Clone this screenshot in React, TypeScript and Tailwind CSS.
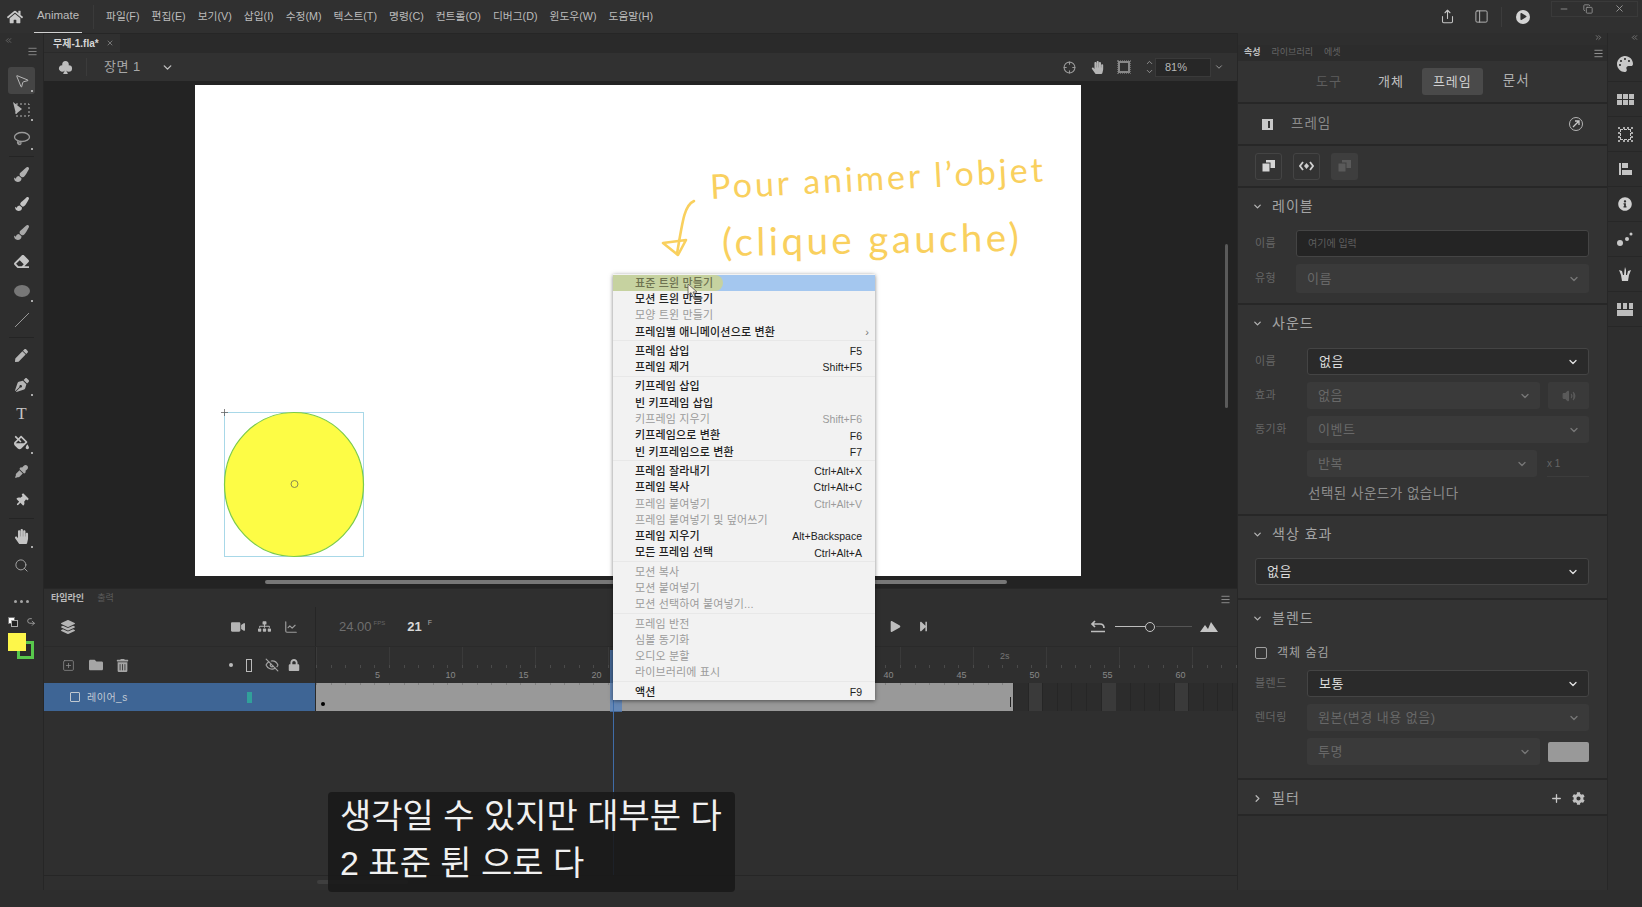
import type { ReactNode } from "react";
import {
  ChevronDown,
  ChevronRight,
  ChevronUp,
  ChevronsLeft,
  ChevronsRight,
  Crosshair,
  EyeOff,
  LineChart,
  Menu,
  Minus,
  MousePointer2,
  PanelLeft,
  Plus,
  Search,
  Share,
  Slash,
  SquarePlus,
  Undo2,
  Volume2,
  X,
  Copy,
} from "lucide-react";
import {
  FaCog,
  FaEraser,
  FaEyeDropper,
  FaFillDrip,
  FaFolder,
  FaHandPaper,
  FaHome,
  FaInfoCircle,
  FaLayerGroup,
  FaLock,
  FaPaintBrush,
  FaPalette,
  FaPen,
  FaPenNib,
  FaPlay,
  FaSitemap,
  FaStepForward,
  FaThumbtack,
  FaTrashAlt,
  FaVideo,
} from "react-icons/fa";
import { BsSuitClubFill } from "react-icons/bs";

const topMenu = ["파일(F)", "편집(E)", "보기(V)", "삽입(I)", "수정(M)", "텍스트(T)", "명령(C)", "컨트롤(O)", "디버그(D)", "윈도우(W)", "도움말(H)"];

type MenuRow = { label: string; key?: string; off?: boolean; arrow?: boolean; hot?: boolean };

const menuGroups: MenuRow[][] = [
  [
    { label: "표준 트윈 만들기", hot: true },
    { label: "모션 트윈 만들기" },
    { label: "모양 트윈 만들기", off: true },
    { label: "프레임별 애니메이션으로 변환", arrow: true },
  ],
  [
    { label: "프레임 삽입", key: "F5" },
    { label: "프레임 제거", key: "Shift+F5" },
  ],
  [
    { label: "키프레임 삽입" },
    { label: "빈 키프레임 삽입" },
    { label: "키프레임 지우기", key: "Shift+F6", off: true },
    { label: "키프레임으로 변환", key: "F6" },
    { label: "빈 키프레임으로 변환", key: "F7" },
  ],
  [
    { label: "프레임 잘라내기", key: "Ctrl+Alt+X" },
    { label: "프레임 복사", key: "Ctrl+Alt+C" },
    { label: "프레임 붙여넣기", key: "Ctrl+Alt+V", off: true },
    { label: "프레임 붙여넣기 및 덮어쓰기", off: true },
    { label: "프레임 지우기", key: "Alt+Backspace" },
    { label: "모든 프레임 선택", key: "Ctrl+Alt+A" },
  ],
  [
    { label: "모션 복사", off: true },
    { label: "모션 붙여넣기", off: true },
    { label: "모션 선택하여 붙여넣기...", off: true },
  ],
  [
    { label: "프레임 반전", off: true },
    { label: "심볼 동기화", off: true },
    { label: "오디오 분할", off: true },
    { label: "라이브러리에 표시", off: true },
  ],
  [{ label: "액션", key: "F9" }],
];

function TransformIcon() {
  return (
    <svg width="20" height="18" viewBox="0 0 20 18" fill="none">
      <rect x="4" y="3" width="13" height="12" stroke="#b5b5b5" strokeDasharray="2 2" />
      <path d="M1 1 L10 8 L4 13 Z" fill="#b5b5b5" />
    </svg>
  );
}

function LassoIcon() {
  return (
    <svg width="18" height="16" viewBox="0 0 18 16" fill="none" stroke="#9a9a9a" strokeWidth="1.3">
      <ellipse cx="9" cy="6" rx="7.5" ry="4.5" />
      <path d="M5 10 C3 13 8 15 8 12 C8 10 5 10 6 14" />
    </svg>
  );
}

type Tool = { icon: ReactNode; more?: boolean };

const toolGroups: Tool[][] = [
  [
    { icon: <MousePointer2 size={16} strokeWidth={1.3} color="#c9c9c9" />, more: true },
    { icon: <TransformIcon />, more: true },
    { icon: <LassoIcon />, more: true },
  ],
  [
    { icon: <FaPaintBrush size={15} color="#b0b0b0" /> },
    { icon: <FaPaintBrush size={14} color="#c4c4c4" /> },
    { icon: <FaPaintBrush size={15} color="#a8a8a8" /> },
    { icon: <FaEraser size={15} color="#c4c4c4" /> },
    { icon: <div className="w-[16px] h-[12px] rounded-[50%] bg-[#777]" />, more: true },
    { icon: <Slash size={16} strokeWidth={1.3} color="#aaa" /> },
  ],
  [
    { icon: <FaPen size={13} color="#b5b5b5" /> },
    { icon: <FaPenNib size={14} color="#b5b5b5" />, more: true },
    { icon: <span className="text-[17px] leading-none text-[#c4c4c4] font-['Liberation_Serif',serif]">T</span> },
    { icon: <FaFillDrip size={15} color="#c4c4c4" />, more: true },
    { icon: <FaEyeDropper size={13} color="#aaa" /> },
    { icon: <FaThumbtack size={13} color="#c4c4c4" className="rotate-45" /> },
  ],
  [
    { icon: <FaHandPaper size={15} color="#c4c4c4" />, more: true },
    { icon: <Search size={15} strokeWidth={1.5} color="#aaa" /> },
  ],
];

function Toolbar() {
  return (
    <div className="w-[44px] shrink-0 flex flex-col bg-[#2e2e2e] border-r border-[#262626]">
      <div className="h-[33px] relative shrink-0">
        <ChevronsLeft size={9} color="#777" className="ml-[4px] mt-[3px]" />
        <Menu size={11} color="#8a8a8a" className="ml-[27px] mt-[1px]" />
      </div>
      {toolGroups.map((group, g) => (
        <div key={g} className="flex flex-col">
          {g > 0 && (
            <div className="h-[7px] flex items-center px-[9px]">
              <div className="h-px w-full bg-[#242424]" />
            </div>
          )}
          {group.map((tool, i) => (
            <div key={i} className="h-[29px] flex items-center justify-center">
              <div className={`relative w-[27px] h-[27px] flex items-center justify-center rounded-[3px] ${g === 0 && i === 0 ? "bg-[#454545]" : ""}`}>
                {tool.icon}
                {tool.more && <span className="absolute right-[2px] bottom-[2px] w-[2px] h-[2px] bg-[#aaa]" />}
              </div>
            </div>
          ))}
        </div>
      ))}
      <div className="mt-[14px] h-[14px] flex items-center justify-center gap-[3px]">
        <span className="w-[3px] h-[3px] bg-[#a5a5a5] rounded-full" />
        <span className="w-[3px] h-[3px] bg-[#a5a5a5] rounded-full" />
        <span className="w-[3px] h-[3px] bg-[#a5a5a5] rounded-full" />
      </div>
      <div className="mt-[7px] h-[14px] flex items-center pl-[8px] gap-[8px]">
        <div className="relative w-[10px] h-[10px]">
          <div className="absolute left-0 top-0 w-[7px] h-[7px] bg-white border border-[#777]" />
          <div className="absolute left-[3px] top-[3px] w-[7px] h-[7px] bg-[#222] border border-[#aaa]" />
        </div>
        <Undo2 size={10} color="#aaa" className="rotate-180" />
      </div>
      <div className="relative h-[28px] mt-[4px]">
        <div className="absolute left-[17px] top-[8px] w-[17px] h-[18px] border-[3px] border-[#58c84c] bg-[#2a2a2a]" />
        <div className="absolute left-[8px] top-0 w-[18px] h-[18px] bg-[#fdf64a]" />
      </div>
    </div>
  );
}

function TopBar() {
  return (
    <div className="h-[33px] shrink-0 flex items-center bg-[#303030] text-[#bdbdbd] text-[10.75px] relative">
      <FaHome size={16} color="#c8c8c8" className="ml-[7px]" />
      <div className="ml-[11px] w-[48px] h-[33px] flex items-center justify-center border-b border-[#d0d0d0] text-[11.5px]">Animate</div>
      <div className="w-px h-[24px] bg-[#3a3a3a] ml-[11px]" />
      <div className="ml-[12px] flex gap-[12px]">
        {topMenu.map((m) => (
          <span key={m}>{m}</span>
        ))}
      </div>
      <div className="ml-auto mr-[4px] flex items-center">
        <Share size={15} color="#c4c4c4" strokeWidth={1.7} />
        <PanelLeft size={15} color="#b0b0b0" strokeWidth={1.6} className="ml-[19px]" />
        <div className="w-px h-[20px] bg-[#3c3c3c] ml-[12px]" />
        <div className="ml-[14px] w-[14px] h-[14px] rounded-full bg-[#d4d4d4] flex items-center justify-center">
          <FaPlay size={7} color="#303030" className="ml-[1px]" />
        </div>
        <div className="ml-[21px] w-[87px] h-[16px] -mt-[16px] flex items-center pl-[7px] border border-[#3a3a3a]">
          <Minus size={10} color="#999" />
          <Copy size={10} color="#999" className="ml-[14px]" />
          <X size={11} color="#999" className="ml-[21px]" />
        </div>
      </div>
    </div>
  );
}

function CanvasDrawing() {
  return (
    <>
      <svg width="145" height="150" viewBox="0 0 145 150" fill="none" className="absolute left-[26px] top-[324px]">
        <rect x="3.5" y="3.5" width="139" height="144" stroke="#a8d8e8" />
        <ellipse cx="73" cy="75.5" rx="69.5" ry="72" fill="#fdfc45" stroke="#7ccb4a" strokeWidth="1.2" />
        <circle cx="73.5" cy="75" r="3.5" stroke="#8a8a50" strokeWidth="1" />
        <path d="M0 3.5 H7 M3.5 0 V7" stroke="#666" strokeWidth="0.8" />
      </svg>
      <svg width="40" height="70" viewBox="0 0 40 70" fill="none" stroke="#f9d05e" strokeWidth="2.6" strokeLinecap="round" strokeLinejoin="round" className="absolute left-[464px] top-[112px]">
        <path d="M35 4 C26 8 24 20 18 57" />
        <path d="M19 58 L4 46 L27 43 Z" />
      </svg>
      <div className="absolute left-[515px] top-[84px] text-[34px] leading-none text-[#f9d05e] tracking-[3px] -rotate-[3deg] font-['Lato',sans-serif] font-normal whitespace-nowrap origin-left">
        Pour animer l’objet
      </div>
      <div className="absolute left-[527px] top-[137px] text-[38.5px] leading-none text-[#f9d05e] tracking-[3.4px] -rotate-[1deg] font-['Lato',sans-serif] font-normal whitespace-nowrap origin-left">
        (clique gauche)
      </div>
    </>
  );
}

function CenterTop() {
  return (
    <>
      <div className="h-[19px] shrink-0 flex bg-[#2a2a2a] border-t border-[#262626]">
        <div className="w-[76px] flex items-center pl-[9px] bg-[#303030] text-[10px] font-bold text-[#d6d6d6]">
          무제-1.fla*
          <X size={8} color="#999" className="ml-[7px]" />
        </div>
      </div>
      <div className="h-[29px] shrink-0 flex items-center bg-[#313131] border-t border-[#2a2a2a]">
        <BsSuitClubFill size={15} color="#bdbdbd" className="ml-[14px]" />
        <div className="w-px h-[18px] bg-[#3b3b3b] ml-[13px]" />
        <span className="ml-[17px] text-[13px] text-[#a8a8a8] tracking-[0.5px]">장면 1</span>
        <ChevronDown size={13} strokeWidth={2.5} color="#c0c0c0" className="ml-[20px]" />
        <div className="ml-auto flex items-center pr-[13px]">
          <Crosshair size={13} color="#999" />
          <FaHandPaper size={13} color="#b5b5b5" className="ml-[15px]" />
          <div className="ml-[14px] w-[12px] h-[12px] border-2 border-[#888] outline-1 outline-dotted outline-[#666]" />
          <div className="ml-[15px] flex flex-col">
            <ChevronUp size={9} color="#aaa" />
            <ChevronDown size={9} color="#aaa" />
          </div>
          <div className="ml-[1px] w-[56px] h-[19px] bg-[#272727] border border-[#3a3a3a] flex items-center pl-[9px] text-[11px] text-[#b8b8b8]">81%</div>
          <ChevronDown size={10} color="#aaa" className="ml-[3px]" />
        </div>
      </div>
      <div className="h-[507px] shrink-0 relative bg-[#232323] pt-[4px] pl-[151px]">
        <div className="w-[886px] h-[491px] bg-white relative">
          <CanvasDrawing />
        </div>
        <div className="absolute left-[221px] top-[499px] w-[742px] h-[4px] bg-[#777] rounded-full" />
        <div className="absolute left-[1181px] top-[163px] w-[3px] h-[164px] bg-[#5a5a5a] rounded-full" />
      </div>
    </>
  );
}

function Timeline() {
  const numbers = [5, 10, 15, 20, null, null, null, 40, 45, 50, 55, 60];
  return (
    <div className="flex-1 flex flex-col bg-[#2f2f2f] text-[#aaa] border-t border-[#272727]">
      <div className="h-[18px] shrink-0 flex items-center pl-[7px] pt-[2px] gap-[13px] text-[9px] relative">
        <span className="font-bold text-[#bcbcbc]">타임라인</span>
        <span className="text-[#5c5c5c]">출력</span>
        <Menu size={11} color="#909090" className="ml-auto mr-[6px]" />
      </div>
      <div className="h-[39px] shrink-0 flex items-center">
        <div className="w-[272px] flex items-center border-r border-[#262626] h-full">
          <FaLayerGroup size={14} color="#b5b5b5" className="ml-[17px]" />
          <FaVideo size={14} color="#b5b5b5" className="ml-[156px]" />
          <FaSitemap size={13} color="#b5b5b5" className="ml-[13px]" />
          <LineChart size={14} color="#9c9c9c" className="ml-[13px]" />
        </div>
        <div className="w-[572px] flex items-center pl-[23px]">
          <span className="text-[13px] text-[#6e6e6e]">24.00</span>
          <span className="text-[6px] text-[#666] ml-[2px] -mt-[7px]">FPS</span>
          <span className="ml-[22px] text-[13px] font-bold text-[#d8d8d8]">21</span>
          <span className="ml-[6px] text-[7px] -mt-[7px]">F</span>
        </div>
        <FaPlay size={11} color="#bdbdbd" className="ml-[2px]" />
        <FaStepForward size={11} color="#bdbdbd" className="ml-[17px]" />
        <svg width="16" height="13" viewBox="0 0 16 13" fill="none" stroke="#bdbdbd" strokeWidth="1.7" className="ml-[161px]">
          <path d="M5 1 L2 4 L5 7 M2 4 H10 C13 4 14 6 14 8 M1 11.5 H15" />
        </svg>
        <div className="ml-[9px] w-[30px] h-[1.5px] bg-[#bdbdbd]" />
        <div className="w-[10px] h-[10px] rounded-full border-[1.5px] border-[#c4c4c4]" />
        <div className="w-[36px] h-px bg-[#555] ml-[1px]" />
        <svg width="18" height="10" viewBox="0 0 18 10" fill="#c4c4c4" className="ml-[8px]">
          <path d="M0 10 L5 3 L8 7 L11 0 L18 10 Z" />
        </svg>
      </div>
      <div className="h-[37px] shrink-0 flex border-t border-[#2a2a2a]">
        <div className="w-[272px] flex items-center border-r border-[#262626]">
          <SquarePlus size={13} color="#8f8f8f" strokeWidth={1.4} className="ml-[18px]" />
          <FaFolder size={14} color="#a5a5a5" className="ml-[14px]" />
          <FaTrashAlt size={13} color="#a5a5a5" className="ml-[13px]" />
          <span className="ml-[100px] w-[4px] h-[4px] rounded-full bg-[#bbb]" />
          <div className="ml-[13px] w-[6px] h-[13px] border border-[#bbb]" />
          <EyeOff size={14} color="#a5a5a5" className="ml-[13px]" />
          <FaLock size={12} color="#b5b5b5" className="ml-[9px]" />
        </div>
        <div className="flex-1 relative pl-[25px] flex items-end pb-[1px] text-[9px] text-[#888] bg-[repeating-linear-gradient(90deg,#3a3a3a_0,#3a3a3a_1px,transparent_1px,transparent_73px)] bg-[length:100%_18px] bg-no-repeat">
          {numbers.map((n, i) => (
            <span key={i} className="w-[73px] text-center shrink-0">
              {n}
            </span>
          ))}
          <span className="absolute left-[684px] top-[3px] text-[9px] text-[#777]">2s</span>
          <div className="absolute left-0 right-0 top-[18px] h-[3px] bg-[repeating-linear-gradient(90deg,#4a4a4a_0,#4a4a4a_1px,transparent_1px,transparent_14.6px)]" />
        </div>
      </div>
      <div className="h-[28px] shrink-0 flex">
        <div className="w-[272px] flex items-center bg-[#3e6595] border-r border-[#2a2a2a] relative">
          <div className="ml-[26px] w-[10px] h-[10px] border-[1.5px] border-[#c0c8d0] rounded-[1px]" />
          <span className="ml-[7px] text-[10px] text-[#c4cbd4] tracking-[0.5px]">레이어_s</span>
          <div className="absolute left-[203px] top-[9px] w-[5px] h-[11px] bg-[#31a09a]" />
        </div>
        <div className="flex-1 flex relative bg-[#2c2c2c]">
          <div className="w-[697px] h-full bg-[#999999] relative bg-[repeating-linear-gradient(90deg,#808080_0,#808080_1px,transparent_1px,transparent_14.6px)] bg-[length:100%_2px] bg-no-repeat">
            <div className="absolute left-[5px] top-[19px] w-[4px] h-[4px] rounded-full bg-black" />
            <div className="absolute right-[2px] top-[14px] w-px h-[10px] bg-[#222]" />
          </div>
          <div className="flex-1 h-full pl-[16px] flex bg-[repeating-linear-gradient(90deg,#262626_0,#262626_1px,transparent_1px,transparent_14.6px)]">
            <div className="w-[13px] h-full bg-[#3a3a3a]" />
            <div className="w-[60px] h-full" />
            <div className="w-[14px] h-full bg-[#3a3a3a]" />
            <div className="w-[59px] h-full" />
            <div className="w-[13px] h-full bg-[#3a3a3a]" />
          </div>
        </div>
      </div>
      <div className="flex-1 relative">
        <div className="absolute left-0 right-0 bottom-[14px] h-px bg-[#262626]" />
        <div className="absolute left-[273px] bottom-[6px] w-[91px] h-[4px] rounded-full bg-[#3f3f3f]" />
      </div>
    </div>
  );
}

function Select({ text, active, className = "" }: { text: string; active?: boolean; className?: string }) {
  return (
    <div className={`flex items-center justify-between h-[27px] rounded-[3px] pl-[11px] pr-[9px] text-[13px] tracking-[0.5px] ${active ? "bg-[#2a2a2a] border border-[#444] text-[#dcdcdc]" : "bg-[#3a3a3a] text-[#686868]"} ${className}`}>
      <span>{text}</span>
      <ChevronDown size={12} strokeWidth={2.6} color={active ? "#e2e2e2" : "#777"} />
    </div>
  );
}

function Field({ label, width = 52, children }: { label?: string; width?: number; children: ReactNode }) {
  return (
    <div className="flex items-center gap-0 mb-[7px]">
      <span style={{ width }} className="shrink-0 text-[11px] text-[#666] tracking-[0.5px]">
        {label}
      </span>
      {children}
    </div>
  );
}

function Section({ title, height, open = true, extra, children }: { title: string; height: number; open?: boolean; extra?: ReactNode; children?: ReactNode }) {
  return (
    <div style={{ height }} className="shrink-0 flex flex-col pl-[17px] pr-[18px] border-b-2 border-[#272727]">
      <div className="h-[36px] shrink-0 flex items-center text-[14px] text-[#a4a4a4] tracking-[1px]">
        {open ? <ChevronDown size={11} strokeWidth={2.8} color="#b5b5b5" className="-ml-[3px]" /> : <ChevronRight size={11} strokeWidth={2.8} color="#b5b5b5" className="-ml-[3px]" />}
        <span className="ml-[9px]">{title}</span>
        {extra}
      </div>
      {children}
    </div>
  );
}

function KeyframeIcon() {
  return (
    <svg width="15" height="12" viewBox="0 0 15 12" fill="none" stroke="#d0d0d0" strokeWidth="1.8">
      <path d="M4 2 L1 6 L4 10 M11 2 L14 6 L11 10" />
      <path d="M7.5 3 L10 6 L7.5 9 L5 6 Z" fill="#d0d0d0" stroke="none" />
    </svg>
  );
}

function InsertIcon({ color, back }: { color: string; back: string }) {
  return (
    <svg width="13" height="12" viewBox="0 0 13 12">
      <rect x="4" y="0" width="9" height="8" fill={color} />
      <rect x="0" y="3" width="8" height="9" fill={color} stroke={back} strokeWidth="1" />
    </svg>
  );
}

function Properties() {
  return (
    <div className="w-[371px] shrink-0 flex flex-col bg-[#333333] border-x border-[#272727]">
      <div className="h-[12px] shrink-0 flex justify-end pr-[4px] bg-[#2e2e2e]">
        <ChevronsRight size={9} color="#888" />
      </div>
      <div className="h-[16px] shrink-0 flex items-center text-[9px] bg-[#2c2c2c] pl-[6px] gap-[11px] text-[#666]">
        <span className="font-bold text-[#c0c0c0]">속성</span>
        <span>라이브러리</span>
        <span>에셋</span>
        <Menu size={11} color="#999" className="ml-auto mr-[3px]" />
      </div>
      <div className="h-[43px] shrink-0 flex items-center border-b-2 border-[#272727] text-[13px] tracking-[1px]">
        <span className="ml-[78px] text-[#5e5e5e]">도구</span>
        <span className="ml-[36px] text-[#c0c0c0]">개체</span>
        <span className="ml-[18px] w-[61px] h-[27px] flex items-center justify-center rounded-[3px] bg-[#4a4a4a] text-[#d0d0d0]">프레임</span>
        <span className="ml-[20px] text-[13.5px] text-[#b0b0b0]">문서</span>
      </div>
      <div className="h-[42px] shrink-0 flex items-center border-b-2 border-[#272727]">
        <div className="ml-[24px] w-[11px] h-[11px] bg-[#c8c8c8] flex items-center justify-center">
          <div className="ml-[2px] w-[2px] h-[7px] bg-[#333]" />
        </div>
        <span className="ml-[18px] text-[13.5px] text-[#8a8a8a] tracking-[1px]">프레임</span>
        <div className="ml-auto mr-[24px] w-[14px] h-[14px] rounded-full border border-[#b5b5b5] flex items-center justify-center text-[#bbb]">
          <svg width="8" height="8" viewBox="0 0 8 8" fill="none" stroke="#c8c8c8" strokeWidth="1.3">
            <path d="M1 7 L7 1 M3 1 H7 V5" />
          </svg>
        </div>
      </div>
      <div className="h-[42px] shrink-0 flex items-center gap-[11px] pl-[17px] border-b-2 border-[#272727]">
        <div className="w-[27px] h-[27px] rounded-[3px] border border-[#444] flex items-center justify-center">
          <InsertIcon color="#d4d4d4" back="#333" />
        </div>
        <div className="w-[27px] h-[27px] rounded-[3px] border border-[#444] flex items-center justify-center">
          <KeyframeIcon />
        </div>
        <div className="w-[27px] h-[27px] rounded-[3px] bg-[#3e3e3e] flex items-center justify-center">
          <InsertIcon color="#5a5a5a" back="#3e3e3e" />
        </div>
      </div>
      <Section title="레이블" height={117}>
        <div className="pt-[6px]">
          <Field label="이름" width={41}>
            <div className="flex-1 h-[27px] rounded-[3px] bg-[#242424] border border-[#444] flex items-center pl-[11px] text-[10px] text-[#5e5e5e]">
              여기에 입력
            </div>
          </Field>
          <Field label="유형" width={41}>
            <Select text="이름" className="flex-1 h-[29px]" />
          </Field>
        </div>
      </Section>
      <Section title="사운드" height={211}>
        <div className="pt-[7px]">
          <Field label="이름">
            <Select text="없음" active className="flex-1" />
          </Field>
          <Field label="효과">
            <Select text="없음" className="w-[233px]" />
            <div className="ml-[8px] w-[41px] h-[27px] rounded-[2px] bg-[#3a3a3a] flex items-center justify-center">
              <Volume2 size={14} fill="#5a5a5a" color="#5a5a5a" />
            </div>
          </Field>
          <Field label="동기화">
            <Select text="이벤트" className="flex-1" />
          </Field>
          <Field>
            <Select text="반복" className="w-[230px]" />
            <span className="ml-[10px] w-[42px] h-[27px] flex items-center border-b border-[#3c3c3c] text-[10px] text-[#666]">x 1</span>
          </Field>
          <div className="pl-[53px] mt-[2px] text-[13.5px] text-[#8c8c8c] tracking-[0.5px]">선택된 사운드가 없습니다</div>
        </div>
      </Section>
      <Section title="색상 효과" height={84}>
        <div className="pt-[6px]">
          <Select text="없음" active />
        </div>
      </Section>
      <Section title="블렌드" height={180}>
        <div className="h-[34px] flex items-center text-[12px] text-[#a4a4a4] tracking-[1px]">
          <div className="w-[12px] h-[12px] rounded-[2px] border-[1.5px] border-[#a0a0a0] mr-[10px]" />
          객체 숨김
        </div>
        <Field label="블렌드">
          <Select text="보통" active className="flex-1" />
        </Field>
        <Field label="렌더링">
          <Select text="원본(변경 내용 없음)" className="flex-1" />
        </Field>
        <Field>
          <Select text="투명" className="w-[234px]" />
          <div className="ml-[8px] w-[41px] h-[20px] rounded-[2px] bg-[#999]" />
        </Field>
      </Section>
      <Section
        title="필터"
        height={36}
        open={false}
        extra={
          <div className="ml-auto flex items-center gap-[9px] pr-[4px]">
            <Plus size={13} strokeWidth={2.4} color="#c8c8c8" />
            <FaCog size={13} color="#c0c0c0" />
          </div>
        }
      />
      <div className="flex-1 bg-[#303030]" />
    </div>
  );
}

function StripGrid({ cols }: { cols: number }) {
  return (
    <div className="grid gap-[1px]" style={{ gridTemplateColumns: `repeat(${cols}, 5px)` }}>
      {Array.from({ length: cols * 2 }).map((_, i) => (
        <div key={i} className="h-[5px] bg-[#bdbdbd]" />
      ))}
    </div>
  );
}

function BrushesIcon() {
  return (
    <svg width="14" height="16" viewBox="0 0 14 16" fill="#d0d0d0">
      <path d="M3 9 H11 L10 15 H4 Z" />
      <path d="M6 9 L6.5 4 L7 1 L8 4 L8 9 Z M3 9 L1 4 L4 5 L5 9 Z M11 9 L13 4 L10 5 L9 9 Z" />
    </svg>
  );
}

function RightStrip() {
  const icons: ReactNode[] = [
    <FaPalette size={16} color="#c8c8c8" />,
    <StripGrid cols={3} />,
    <div className="w-[11px] h-[11px] border border-dashed border-[#c8c8c8] outline-2 outline-dotted outline-[#aaa]" />,
    <div className="flex flex-col gap-[2px] border-l-2 border-[#c4c4c4] pl-[1px]">
      <div className="w-[6px] h-[5px] bg-[#c4c4c4]" />
      <div className="w-[10px] h-[5px] bg-[#c4c4c4]" />
    </div>,
    <FaInfoCircle size={14} color="#d0d0d0" />,
    <svg width="16" height="14" viewBox="0 0 16 14" fill="#c8c8c8">
      <circle cx="3" cy="11" r="3" />
      <circle cx="10" cy="7" r="2" />
      <circle cx="14" cy="2" r="1.5" />
    </svg>,
    <BrushesIcon />,
    <div className="flex flex-col gap-[1px] items-center">
      <div className="flex gap-[2px]">
        <div className="w-[4px] h-[6px] bg-[#bdbdbd]" />
        <div className="w-[4px] h-[6px] bg-[#bdbdbd]" />
        <div className="w-[4px] h-[6px] bg-[#bdbdbd]" />
      </div>
      <div className="w-[16px] h-[6px] bg-[#bdbdbd]" />
    </div>,
  ];
  return (
    <div className="w-[34px] shrink-0 flex flex-col bg-[#2e2e2e]">
      <div className="h-[14px] flex justify-end pr-[3px]">
        <ChevronsLeft size={9} color="#888" />
      </div>
      {icons.map((icon, i) => (
        <div key={i} className="h-[35px] flex items-center justify-center border-b border-[#272727]">
          {icon}
        </div>
      ))}
    </div>
  );
}

function ContextMenu() {
  return (
    <div className="absolute left-[613px] top-[274px] w-[262px] h-[426px] pt-[1px] bg-[#f2f2f2] shadow-[0_1px_4px_rgba(0,0,0,0.5)] text-[11px] tracking-[0.15px] leading-none">
      {menuGroups.map((group, g) => (
        <div key={g}>
          {g > 0 && <div className="h-[3px] border-t border-[#e8e8e8]" />}
          {group.map((row) => (
            <div key={row.label} className={`h-[16.3px] relative flex items-center pl-[22px] pr-[13px] ${row.hot ? "bg-[#a4c7ef]" : ""} ${row.off ? "text-[#9b9b9b]" : "text-[#222] font-medium"}`}>
              {row.hot && <div className="absolute left-0 top-0 w-[110px] h-full rounded-r-full bg-[#c6d2a0]" />}
              <span className={`relative ${row.hot ? "text-[#6e7250]" : ""}`}>{row.label}</span>
              {row.key && <span className="ml-auto font-normal text-[10.5px] tracking-normal">{row.key}</span>}
              {row.arrow && <span className="ml-auto -mr-[7px] text-[#777]">›</span>}
            </div>
          ))}
        </div>
      ))}
      <svg width="12" height="16" viewBox="0 0 12 16" className="absolute left-[74px] top-[9px]">
        <path d="M1 1 L1 12 L4 9.5 L6 14 L8 13 L6 9 L10 9 Z" fill="#f5f0e0" stroke="#555" strokeWidth="0.8" />
      </svg>
    </div>
  );
}

export default function App() {
  return (
    <div className="relative w-[1642px] h-[907px] overflow-hidden flex flex-col bg-[#2d2d2d] font-['Liberation_Sans','Noto_Sans_CJK_KR',sans-serif]">
      <TopBar />
      <div className="h-[857px] shrink-0 flex">
        <Toolbar />
        <div className="flex-1 min-w-0 flex flex-col">
          <CenterTop />
          <Timeline />
        </div>
        <Properties />
        <RightStrip />
      </div>
      <div className="absolute left-[610px] top-[650px] w-[12px] h-[62px] bg-[#4f7fc0]/70" />
      <div className="absolute left-[613px] top-[700px] w-px h-[175px] bg-[#3f6ca8]" />
      <ContextMenu />
      <div className="absolute left-[328px] top-[792px] w-[407px] h-[100px] rounded-[4px] bg-[#1a1a1a]/90 pl-[12px] pt-[1px] text-[34px] leading-[47px] text-[#f0f0f0]">
        <div>생각일 수 있지만 대부분 다</div>
        <div>2 표준 튄 으로 다</div>
      </div>
    </div>
  );
}
